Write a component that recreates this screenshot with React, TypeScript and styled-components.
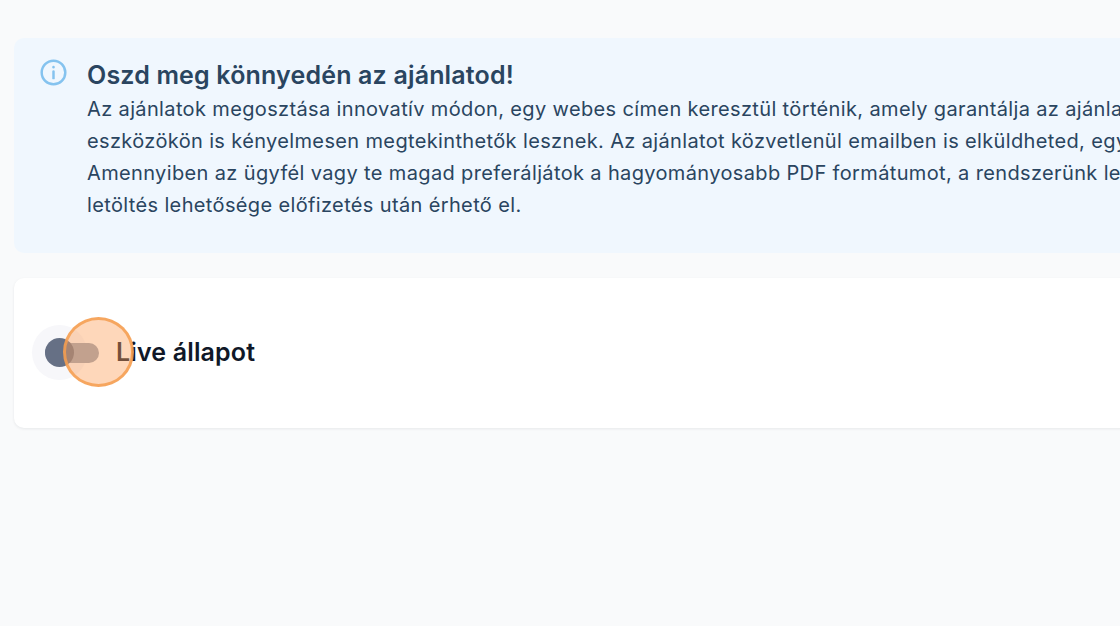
import React from "react";
import styled, { createGlobalStyle } from "styled-components";

const GlobalStyle = createGlobalStyle`
  html, body {
    margin: 0;
    padding: 0;
    height: 100%;
    overflow: hidden;
    background: #f9fafb;
  }
  #root {
    height: 100%;
  }
`;

const Page = styled.div`
  width: 1120px;
  height: 626px;
  overflow: hidden;
  padding: 38px 0 0 14px;
  box-sizing: border-box;
  font-family: Inter, "Liberation Sans", sans-serif;
  display: flex;
  flex-direction: column;
  gap: 25px;
`;

const Notice = styled.section`
  width: 1500px;
  height: 215px;
  flex: none;
  box-sizing: border-box;
  padding: 20px 26px;
  display: flex;
  gap: 20px;
  background: #f0f7fe;
  border-radius: 10px;
  color: #2a4560;
`;

const InfoIcon = styled.svg`
  width: 27px;
  height: 27px;
  flex: none;
  margin-top: 1px;
  color: #85c3ef;
`;

const NoticeBody = styled.div`
  display: flex;
  flex-direction: column;
`;

const NoticeTitle = styled.h3`
  margin: 0;
  font-size: 25px;
  line-height: 35px;
  font-weight: 600;
  letter-spacing: 0.17px;
`;

const NoticeLine = styled.p`
  margin: 0;
  font-size: 20px;
  line-height: 32px;
  letter-spacing: 0.36px;
  white-space: nowrap;
`;

const Card = styled.section`
  width: 1500px;
  height: 150px;
  flex: none;
  box-sizing: border-box;
  padding: 0 17px;
  display: flex;
  align-items: center;
  gap: 17px;
  background: #fff;
  border-radius: 10px;
  box-shadow: 0 1px 3px rgba(16, 24, 40, 0.08);
`;

const SwitchWrap = styled.div`
  position: relative;
  width: 68px;
  height: 56px;
  display: flex;
  align-items: center;
`;

const Halo = styled.span`
  position: absolute;
  left: 1px;
  top: 0;
  width: 55px;
  height: 55px;
  border-radius: 50%;
  background: #f7f7fa;
`;

const Track = styled.span`
  position: absolute;
  left: 14px;
  top: 18px;
  width: 54px;
  height: 20px;
  border-radius: 10px;
  background: #98a2b3;
`;

const Thumb = styled.span`
  position: absolute;
  left: 14px;
  top: 13px;
  width: 29px;
  height: 29px;
  border-radius: 50%;
  background: #667085;
`;

const Label = styled.span`
  font-size: 25px;
  line-height: 36px;
  margin-top: -2px;
  font-weight: 600;
  letter-spacing: 0.15px;
  color: #101828;
`;

const ClickMarker = styled.div`
  position: absolute;
  left: 63px;
  top: 317px;
  width: 71px;
  height: 70px;
  box-sizing: border-box;
  border-radius: 50%;
  border: 3px solid rgba(245, 158, 80, 0.85);
  background: rgba(253, 160, 90, 0.42);
`;

const lines = [
  "Az ajánlatok megosztása innovatív módon, egy webes címen keresztül történik, amely garantálja az ajánlatok naprakészségét, és minden",
  "eszközökön is kényelmesen megtekinthetők lesznek. Az ajánlatot közvetlenül emailben is elküldheted, egyetlen kattintással, bármikor.",
  "Amennyiben az ügyfél vagy te magad preferáljátok a hagyományosabb PDF formátumot, a rendszerünk lehetővé teszi a letöltést is. A PDF",
  "letöltés lehetősége előfizetés után érhető el.",
];

export default function App() {
  return (
    <Page>
      <GlobalStyle />
      <Notice>
        <InfoIcon viewBox="0 0 24 24" fill="none" stroke="currentColor" strokeWidth="2.2" strokeLinecap="round">
          <circle cx="12" cy="12" r="10.5" />
          <path d="M12 11v6" />
          <path d="M12 7.2v.1" />
        </InfoIcon>
        <NoticeBody>
          <NoticeTitle>Oszd meg könnyedén az ajánlatod!</NoticeTitle>
          {lines.map((line) => (
            <NoticeLine key={line}>{line}</NoticeLine>
          ))}
        </NoticeBody>
      </Notice>
      <Card>
        <SwitchWrap>
          <Halo />
          <Track />
          <Thumb />
        </SwitchWrap>
        <Label>Live állapot</Label>
      </Card>
      <ClickMarker />
    </Page>
  );
}
